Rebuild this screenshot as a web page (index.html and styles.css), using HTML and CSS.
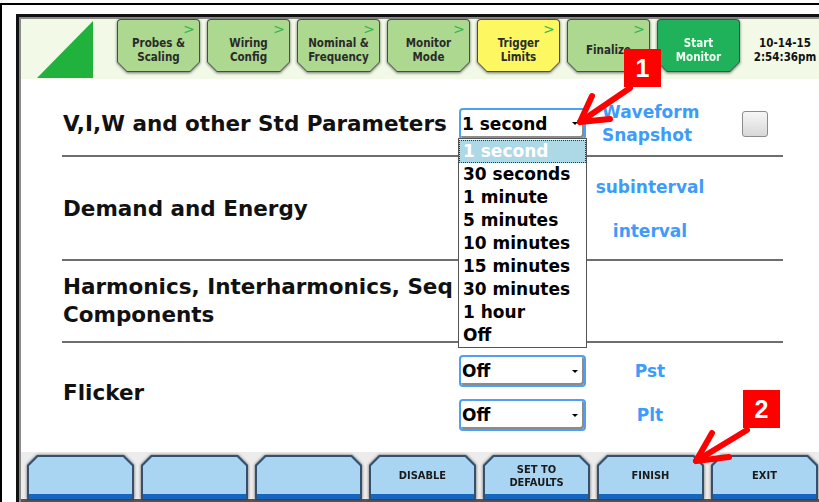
FILE: index.html
```html
<!DOCTYPE html>
<html lang="en">
<head>
<meta charset="utf-8">
<title>Monitor Setup - Journal Intervals</title>
<link rel="stylesheet" href="styles.css">
</head>
<body>
<div class="sheet">
  <div class="screen">
    <header class="topbar">
      <div class="logo">
        <svg width="56" height="57" viewBox="0 0 56 57"><polygon points="56,0 56,57 0,57" fill="#20b23c"/></svg>
      </div>
      <nav class="tabs">
        <div class="tab tab-done"><div class="tab-edge"><div class="tab-face">Probes &amp;<br>Scaling</div></div><span class="chev">&gt;</span></div>
        <div class="tab tab-done"><div class="tab-edge"><div class="tab-face">Wiring<br>Config</div></div><span class="chev">&gt;</span></div>
        <div class="tab tab-done"><div class="tab-edge"><div class="tab-face">Nominal &amp;<br>Frequency</div></div><span class="chev">&gt;</span></div>
        <div class="tab tab-done"><div class="tab-edge"><div class="tab-face">Monitor<br>Mode</div></div><span class="chev">&gt;</span></div>
        <div class="tab tab-current"><div class="tab-edge"><div class="tab-face">Trigger<br>Limits</div></div><span class="chev">&gt;</span></div>
        <div class="tab tab-done"><div class="tab-edge"><div class="tab-face">Finalize</div></div><span class="chev">&gt;</span></div>
        <div class="tab tab-start"><div class="tab-edge"><div class="tab-face">Start<br>Monitor</div></div></div>
      </nav>
      <div class="clock">10-14-15<br>2:54:36pm</div>
    </header>

    <main class="params">
      <section class="row row-std">
        <div class="label">V,I,W and other Std Parameters</div>
        <div class="controls">
          <div class="select"><span>1 second</span><span class="caret"></span></div>
        </div>
        <div class="extra">
          <div class="note note-left">Waveform<br>Snapshot</div>
          <div class="checkbox"></div>
        </div>
      </section>

      <section class="row row-demand">
        <div class="label">Demand and Energy</div>
        <div class="controls stack">
          <div class="select blank"></div>
          <div class="select blank"></div>
        </div>
        <div class="notes">
          <div class="note">subinterval</div>
          <div class="note">interval</div>
        </div>
      </section>

      <section class="row row-harm">
        <div class="label">Harmonics, Interharmonics, Seq<br>Components</div>
        <div class="controls">
          <div class="select blank"></div>
        </div>
        <div></div>
      </section>

      <section class="row row-flicker">
        <div class="label">Flicker</div>
        <div class="controls stack">
          <div class="select"><span>Off</span><span class="caret"></span></div>
          <div class="select"><span>Off</span><span class="caret"></span></div>
        </div>
        <div class="notes">
          <div class="note">Pst</div>
          <div class="note">Plt</div>
        </div>
      </section>
    </main>

    <footer class="softkeys">
      <div class="key"><div class="key-edge"><div class="key-face"></div></div></div>
      <div class="key"><div class="key-edge"><div class="key-face"></div></div></div>
      <div class="key"><div class="key-edge"><div class="key-face"></div></div></div>
      <div class="key"><div class="key-edge"><div class="key-face">DISABLE</div></div></div>
      <div class="key"><div class="key-edge"><div class="key-face">SET TO<br>DEFAULTS</div></div></div>
      <div class="key"><div class="key-edge"><div class="key-face">FINISH</div></div></div>
      <div class="key"><div class="key-edge"><div class="key-face">EXIT</div></div></div>
    </footer>
  </div>
</div>

<!-- open list of the first interval selector -->
<ul class="popup">
  <li class="sel">1 second</li>
  <li>30 seconds</li>
  <li>1 minute</li>
  <li>5 minutes</li>
  <li>10 minutes</li>
  <li>15 minutes</li>
  <li>30 minutes</li>
  <li>1 hour</li>
  <li>Off</li>
</ul>

<!-- numbered callouts -->
<svg class="callouts" width="819" height="502" viewBox="0 0 819 502">
  <g fill="none" stroke="#f00" stroke-width="6" stroke-linecap="round" stroke-linejoin="round">
    <path d="M630 88 L580 122"/>
    <path d="M592 96 L580 122 L610 119"/>
    <path d="M747 430 L696 461"/>
    <path d="M712 433 L696 461 L729 457"/>
  </g>
</svg>
<div class="badge badge-1">1</div>
<div class="badge badge-2">2</div>
</body>
</html>
```

FILE: styles.css
```css
* { box-sizing: border-box; }

html, body { margin: 0; padding: 0; }

body {
  width: 819px;
  height: 502px;
  overflow: hidden;
  position: relative;
  background: #fff;
  font-family: "DejaVu Sans", Verdana, sans-serif;
  color: #111;
}

/* page frame around the instrument screen */
.sheet {
  margin-top: 3px;
  height: 499px;
  border-top: 2px solid #000;
  border-left: 2px solid #000;
  padding: 9px 0 0 14px;
}

.screen {
  width: 830px;
  height: 488px;
  border-top: 3px solid #111;
  border-left: 3px solid #111;
  box-shadow: inset 2px 2px 0 #8a8a8a;
  padding: 2px 0 0 2px;
  display: flex;
  flex-direction: column;
}

/* ---------- top wizard bar ---------- */
.topbar {
  height: 60px;
  flex: none;
  background: #f2f9e7;
  display: flex;
  align-items: flex-start;
}

.logo {
  margin: 2px 0 0 16px;
  width: 56px;
  height: 57px;
}
.logo svg { display: block; }

.tabs {
  display: flex;
  gap: 7px;
  margin-left: 24px;
}

.tab {
  position: relative;
  width: 83px;
  height: 53px;
  filter: drop-shadow(0 1px 1.5px rgba(0, 0, 0, 0.55));
}

.tab-edge {
  height: 100%;
  padding: 1px;
  background: #4a4a4a;
  border-radius: 4px 4px 0 0;
  clip-path: polygon(0 0, 100% 0, 100% calc(100% - 10px), calc(100% - 10px) 100%, 10px 100%, 0 calc(100% - 10px));
}

.tab-face {
  height: 100%;
  display: flex;
  align-items: center;
  justify-content: center;
  text-align: center;
  padding-top: 9px;
  border-radius: 3px 3px 0 0;
  clip-path: polygon(0 0, 100% 0, 100% calc(100% - 9px), calc(100% - 9px) 100%, 9px 100%, 0 calc(100% - 9px));
  font-family: "DejaVu Sans Condensed", "DejaVu Sans", sans-serif;
  font-stretch: condensed;
  font-weight: bold;
  font-size: 11.5px;
  line-height: 14px;
  color: #2a2a2a;
}

.tab-done .tab-face { background: #acd88f; }
.tab-current .tab-face { background: #fdf862; }
.tab-start .tab-face { background: #1fb25a; color: #f4fff6; }

.chev {
  position: absolute;
  top: 3px;
  right: 5px;
  font-size: 14px;
  line-height: 14px;
  color: #2db34b;
}

.clock {
  width: 90px;
  padding-top: 17px;
  text-align: center;
  font-family: "DejaVu Sans Condensed", "DejaVu Sans", sans-serif;
  font-stretch: condensed;
  font-weight: bold;
  font-size: 11.5px;
  line-height: 14px;
  color: #111;
}

/* ---------- parameter rows ---------- */
.params {
  height: 373px;
  flex: none;
  background: #fff;
  padding-left: 41px;
}

.row {
  width: 721px;
  display: grid;
  grid-template-columns: 397px 127px 1fr;
  align-items: center;
  border-bottom: 2px solid #6e6e6e;
}
.row-std { height: 78px; padding-top: 13px; }
.row-demand { height: 104px; padding-top: 2px; }
.row-harm { height: 82px; }
.row-flicker { height: 100px; border-bottom: 0; }

.label {
  padding-left: 1px;
  font-weight: bold;
  font-size: 21.5px;
  line-height: 28px;
  color: #111;
}

.controls { display: flex; flex-direction: column; }
.controls.stack { gap: 12px; }

.select {
  width: 127px;
  height: 32px;
  display: flex;
  align-items: center;
  justify-content: space-between;
  padding: 0 6px 0 1px;
  background: #fff;
  border: 2px solid #4f9ff2;
  border-radius: 4px;
  box-shadow: inset -2px -2px 0 #8c8c8c;
  font-weight: bold;
  font-size: 17px;
  color: #000;
}

.caret {
  width: 0;
  height: 0;
  border-left: 3px solid transparent;
  border-right: 3px solid transparent;
  border-top: 3px solid #000;
}

.extra {
  display: flex;
  align-items: center;
}

.note {
  font-weight: bold;
  font-size: 17px;
  line-height: 23px;
  color: #3d9cfa;
  text-align: center;
}
.note-left {
  text-align: left;
  margin-left: 16px;
  width: 140px;
}

.notes {
  width: 128px;
  display: flex;
  flex-direction: column;
  gap: 21px;
}

.checkbox {
  width: 26px;
  height: 26px;
  border: 1px solid #8c8c8c;
  border-radius: 3px;
  background: linear-gradient(#f6f6f6, #d8d8d8);
}

/* ---------- soft keys ---------- */
.softkeys {
  height: 50px;
  flex: none;
  background: #ececec;
  border-bottom: 3px solid #555;
  padding: 3px 0 0 6px;
  display: flex;
  gap: 7px;
}

.key {
  flex: none;
  width: 107px;
  height: 44px;
  filter: drop-shadow(0 0 1.5px rgba(0, 0, 0, 0.6));
}

.key-edge {
  height: 100%;
  padding: 2px 2px 0;
  background: #34506e;
  clip-path: polygon(10px 0, calc(100% - 10px) 0, 100% 10px, 100% 100%, 0 100%, 0 10px);
}

.key-face {
  height: 100%;
  display: flex;
  align-items: center;
  justify-content: center;
  text-align: center;
  background: #a9d5f2;
  border-bottom: 5px solid #1665bf;
  clip-path: polygon(9px 0, calc(100% - 9px) 0, 100% 9px, 100% 100%, 0 100%, 0 9px);
  font-family: "DejaVu Sans Condensed", "DejaVu Sans", sans-serif;
  font-stretch: condensed;
  font-weight: bold;
  font-size: 11px;
  line-height: 13px;
  color: #1a1a1a;
}

/* ---------- open drop-down list ---------- */
.popup {
  position: absolute;
  left: 458px;
  top: 138px;
  width: 129px;
  margin: 0;
  padding: 1px 0 0;
  list-style: none;
  background: #fff;
  border: 1px solid #555;
}
.popup li {
  height: 23px;
  padding-left: 4px;
  font-weight: bold;
  font-size: 17px;
  line-height: 23px;
  color: #000;
}
.popup li.sel {
  background: #add8e6;
  color: #fff;
  outline: 1px dotted #333;
  outline-offset: -1px;
}

/* ---------- callouts ---------- */
.callouts {
  position: absolute;
  left: 0;
  top: 0;
  pointer-events: none;
}

.badge {
  position: absolute;
  width: 37px;
  height: 38px;
  background: #f00;
  color: #fff;
  font-family: "Liberation Sans", Arial, sans-serif;
  font-weight: bold;
  font-size: 25px;
  line-height: 38px;
  text-align: center;
}
.badge-1 { left: 624px; top: 49px; }
.badge-2 { left: 743px; top: 390px; }
```
